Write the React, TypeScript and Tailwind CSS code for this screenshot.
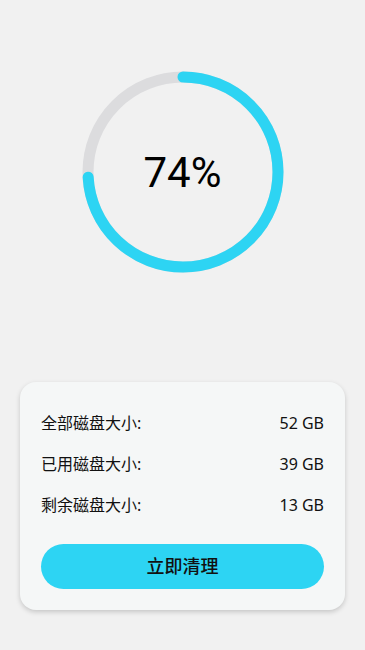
import React from "react";

const rows = [
  { label: "全部磁盘大小:", value: "52 GB" },
  { label: "已用磁盘大小:", value: "39 GB" },
  { label: "剩余磁盘大小:", value: "13 GB" },
];

function Ring({ percent }: { percent: number }) {
  const r = 95;
  const c = 2 * Math.PI * r;
  return (
    <div className="relative w-[202px] h-[202px]">
      <svg width="202" height="202" viewBox="0 0 202 202">
        <circle cx="101" cy="101" r={r} fill="none" stroke="#dcdcde" strokeWidth="11" />
        <circle
          cx="101"
          cy="101"
          r={r}
          fill="none"
          stroke="#2dd4f3"
          strokeWidth="11"
          strokeLinecap="round"
          strokeDasharray={`${(c * percent) / 100} ${c}`}
          transform="rotate(-90 101 101)"
        />
      </svg>
      <div className="absolute inset-0 flex items-center justify-center pt-[2px]">
        <span className="text-[42px] font-normal text-[#000] leading-none" style={{ fontFamily: "Roboto, sans-serif" }}>
          {percent}%
        </span>
      </div>
    </div>
  );
}

export default function App() {
  return (
    <div
      className="w-[365px] h-[650px] bg-[#f1f1f1] flex flex-col items-center pt-[71px]"
      style={{ fontFamily: '"Noto Sans", "Noto Sans CJK SC", sans-serif' }}
    >
      <Ring percent={74} />
      <div className="mt-[109px] w-[325px] bg-[#f5f7f7] rounded-[16px] shadow-[0_2px_5px_rgba(0,0,0,0.18)] px-[21px] pt-[20px] pb-[21px]">
        {rows.map((row) => (
          <div key={row.label} className="h-[41px] flex items-center justify-between text-[16px] text-[#111]">
            <span>{row.label}</span>
            <span>{row.value}</span>
          </div>
        ))}
        <button className="mt-[19px] w-full h-[45px] rounded-full bg-[#2dd4f3] text-[18px] font-medium text-[#111] flex items-center justify-center">
          立即清理
        </button>
      </div>
    </div>
  );
}
